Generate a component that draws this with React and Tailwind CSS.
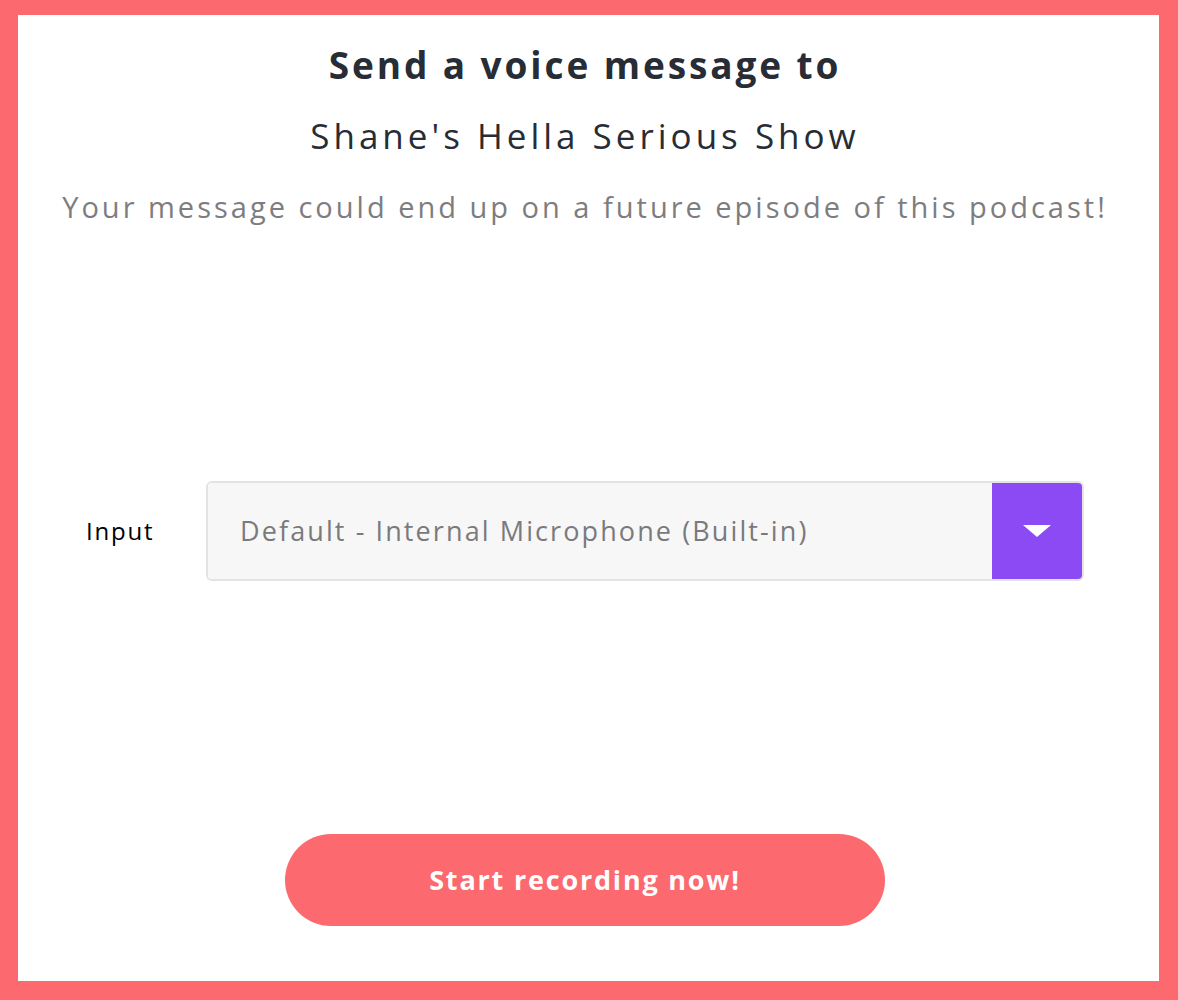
import React from 'react';

const App = () => {
  return (
    <div className="h-[1000px] w-full bg-[#fc696e] pt-[15px] pl-[18px] pr-[19px] pb-[19px] font-['Open_Sans',sans-serif]">
      <div className="h-full bg-white flex flex-col items-center pr-[7px]">
        {/* Header */}
        <h1 className="mt-[27px] text-[37px] leading-[46px] font-bold text-[#272c35] tracking-[2.9px]">
          Send a voice message to
        </h1>
        <h2 className="mt-[26px] text-[35px] leading-[44px] text-[#272c35] tracking-[4px]">
          Shane's Hella Serious Show
        </h2>
        <p className="mt-[31px] text-[29px] leading-[36px] text-[#7d7d80] tracking-[3px]">
          Your message could end up on a future episode of this podcast!
        </p>

        {/* Input selector */}
        <div className="mt-[256px] w-full flex items-center pl-[68px] pr-[68px]">
          <label className="w-[120px] text-[24px] text-black tracking-[1.8px]">Input</label>
          <div className="flex-1 h-[100px] flex rounded-[6px] border-2 border-[#e3e3e3] overflow-hidden">
            <div className="flex-1 bg-[#f7f7f7] flex items-center pl-[32px] text-[27px] text-[#7a7a7d] tracking-[2.1px]">
              Default - Internal Microphone (Built-in)
            </div>
            <div className="w-[90px] bg-[#8b4af4] flex items-center justify-center">
              <svg width="28" height="12" viewBox="0 0 28 12">
                <path d="M0 0h28L14 12z" fill="#fff" />
              </svg>
            </div>
          </div>
        </div>

        {/* Record button */}
        <button className="mt-[253px] w-[600px] h-[92px] rounded-full bg-[#fc696e] text-white text-[27px] font-bold tracking-[1.8px]">
          Start recording now!
        </button>
      </div>
    </div>
  );
};

export default App;
